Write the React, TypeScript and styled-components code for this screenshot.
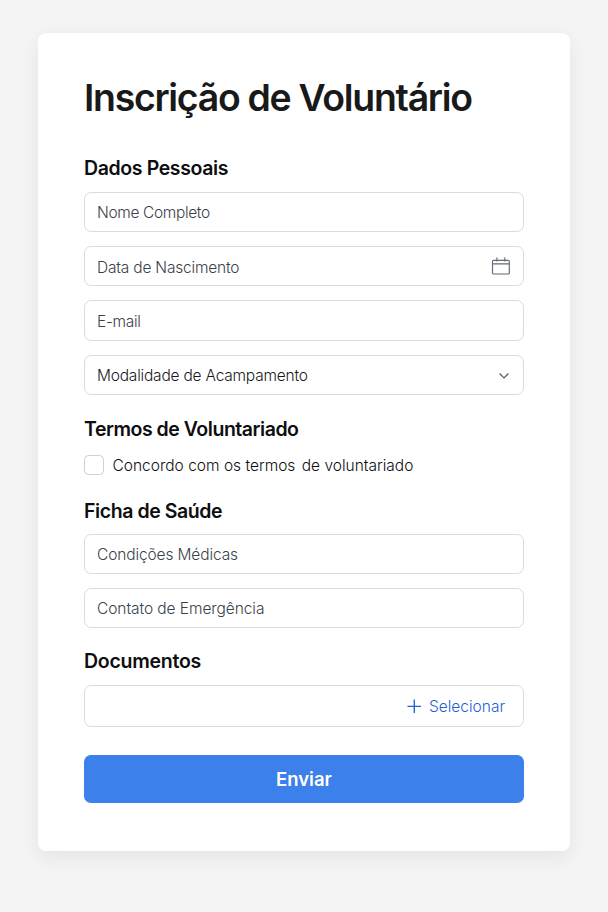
import React from "react";
import styled, { createGlobalStyle } from "styled-components";

const GlobalStyle = createGlobalStyle`
  *, *::before, *::after { box-sizing: border-box; }
  body { margin: 0; background: #f4f4f4; font-family: Inter, "Liberation Sans", sans-serif; color: #0d0e0f; }
`;

const Page = styled.main`
  min-height: 912px;
  padding: 33px 38px 60px;
`;

const Card = styled.form`
  height: 818px;
  padding: 45px 46px 0;
  border-radius: 8px;
  background: #fff;
  box-shadow: 0 6px 20px rgba(0, 0, 0, 0.07);
`;

const Title = styled.h1`
  margin: 0;
  color: #19191a;
  font-size: 37.4px;
  line-height: 40px;
  font-weight: 600;
  letter-spacing: -1.28px;
  white-space: nowrap;
`;

const Heading = styled.h2<{ $top: number; $gap: number; $track: number }>`
  margin: ${(p) => p.$top}px 0 ${(p) => p.$gap}px;
  font-size: 19.5px;
  line-height: 24px;
  font-weight: 600;
  letter-spacing: ${(p) => p.$track}px;
  white-space: nowrap;
`;

const Fields = styled.div`
  display: grid;
  gap: 14px;
`;

const Field = styled.div<{ $strong?: boolean; $height?: number; $drop?: number }>`
  display: flex;
  align-items: center;
  justify-content: space-between;
  height: ${(p) => p.$height ?? 40}px;
  padding: ${(p) => p.$drop ?? 2}px 12px 0;
  border: 1px solid #d9dbde;
  border-radius: 7px;
  font-size: 15.5px;
  font-weight: ${(p) => (p.$strong ? 350 : 300)};
  color: ${(p) => (p.$strong ? "#17191c" : "#3a424a")};
`;

const Label = styled.span<{ $track?: number }>`
  white-space: nowrap;
  letter-spacing: ${(p) => p.$track ?? 0}px;
`;

const Terms = styled.label`
  display: flex;
  align-items: center;
  gap: 8.5px;
  height: 20px;
  font-size: 15.5px;
  font-weight: 350;
`;

const TermsText = styled.span`
  padding-top: 2px;
  white-space: nowrap;
`;

const TermsTail = styled.span`
  margin-left: 2px;
`;

const Box = styled.span`
  width: 20px;
  height: 20px;
  border: 1px solid #cdd0d4;
  border-radius: 4.5px;
`;

const Select = styled.button`
  display: flex;
  align-items: center;
  gap: 7px;
  margin-left: auto;
  padding: 0 6px 0 0;
  border: 0;
  background: none;
  font: inherit;
  font-weight: 350;
  color: #1f62cf;
`;

const Submit = styled.button`
  display: block;
  width: 100%;
  height: 47.5px;
  margin-top: 28.3px;
  padding: 0 0 0.6px;
  border: 0;
  border-radius: 7px;
  background: #3b80eb;
  color: #fff;
  font: 600 18.5px/24px Inter, sans-serif;
`;

const CalendarIcon = () => (
  <svg width="20" height="20" viewBox="0 0 20 20" fill="none" stroke="#5f6b76" strokeWidth="1.15">
    <rect x="1.5" y="3.3" width="16.8" height="13.7" rx="1" />
    <path d="M1.500 6.900h16.800M5.900.600v4M13.800.600v4" />
  </svg>
);

const Chevron = () => (
  <svg width="14" height="14" viewBox="0 0 14 14" fill="none" stroke="#56616c" strokeWidth="1.3">
    <path d="m2.600 4.500 4.400 4.400L11.400 4.500" />
  </svg>
);

const Plus = () => (
  <svg width="16" height="16" viewBox="0 0 16 16" stroke="#1f62cf" strokeWidth="1.35">
    <path d="M8.300.500v13.500M1.500 7.300h13.500" />
  </svg>
);

export default function App() {
  return (
    <Page>
      <GlobalStyle />
      <Card onSubmit={(e) => e.preventDefault()}>
        <Title>Inscrição de Voluntário</Title>
        <Heading $top={38} $gap={12} $track={-0.38}>Dados Pessoais</Heading>
        <Fields>
          <Field $drop={0}><Label $track={-0.36}>Nome Completo</Label></Field>
          <Field $height={40.4}><Label $track={-0.2}>Data de Nascimento</Label><CalendarIcon /></Field>
          <Field $height={40.4}><Label $track={-0.33}>E-mail</Label></Field>
          <Field $strong><Label $track={-0.21}>Modalidade de Acampamento</Label><Chevron /></Field>
        </Fields>
        <Heading $top={22.2} $gap={14} $track={-0.47}>Termos de Voluntariado</Heading>
        <Terms>
          <Box />
          <TermsText>Concordo com os termos <TermsTail>de voluntariado</TermsTail></TermsText>
        </Terms>
        <Heading $top={24} $gap={11} $track={-0.42}>Ficha de Saúde</Heading>
        <Fields>
          <Field><Label $track={-0.12}>Condições Médicas</Label></Field>
          <Field><Label $track={-0.07}>Contato de Emergência</Label></Field>
        </Fields>
        <Heading $top={21} $gap={12} $track={-0.26}>Documentos</Heading>
        <Field $height={42}><Select type="button"><Plus /><Label>Selecionar</Label></Select></Field>
        <Submit type="submit">Enviar</Submit>
      </Card>
    </Page>
  );
}
